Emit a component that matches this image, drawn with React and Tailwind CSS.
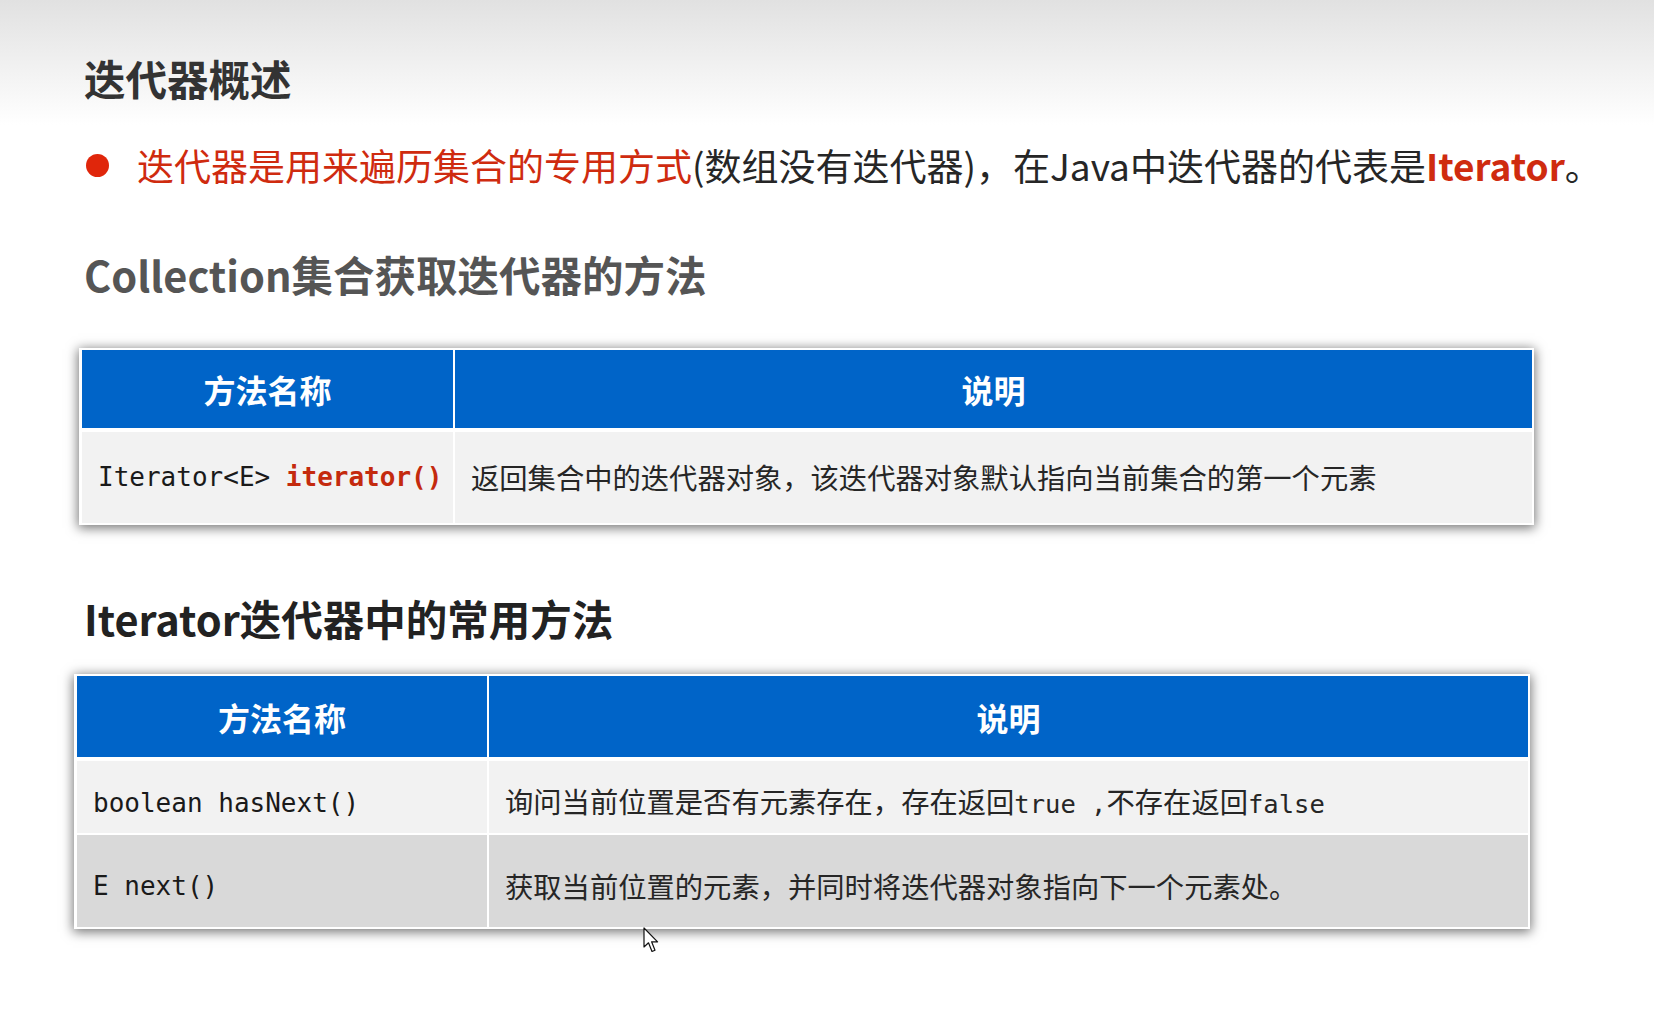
import React from 'react';

const mono = "font-['DejaVu_Sans_Mono','Liberation_Mono',monospace]";

function MethodTable({ className, colsClass, headerClass, rows }) {
  return (
    <div className={`bg-white pt-[2px] pl-[3px] pr-[2px] pb-[2px] shadow-[0_2px_11px_1px_rgba(0,0,0,0.55)] ${className}`}>
      <div className={`grid ${colsClass} gap-x-[2px] ${headerClass}`}>
        <div className="flex items-center justify-center bg-[#0064c8] text-[32px] font-bold text-white">方法名称</div>
        <div className="flex items-center justify-center bg-[#0064c8] text-[32px] font-bold text-white">说明</div>
      </div>
      <div className="mt-[4px] flex flex-col gap-y-[2px]">
        {rows.map((row, i) => (
          <div key={i} className={`grid ${colsClass} gap-x-[2px] ${row.h}`}>
            <div className={`flex items-center pl-[16px] ${row.bg}`}>{row.method}</div>
            <div className={`flex items-center pl-[16px] text-[28.3px] text-[#262626] ${row.bg}`}>{row.desc}</div>
          </div>
        ))}
      </div>
    </div>
  );
}

function Cursor() {
  return (
    <svg className="absolute left-[643px] top-[927px]" width="18" height="27" viewBox="0 0 18 27">
      <path d="M1 1 L1 20 L5.5 15.8 L9 24.5 L12 23.2 L8.6 14.8 L14.6 14.8 Z" fill="#fff" stroke="#111" strokeWidth="1.2" strokeLinejoin="round" />
    </svg>
  );
}

export default function App() {
  const collectionRows = [
    {
      h: 'h-[91px]',
      bg: 'bg-[#f2f2f2]',
      method: (
        <span className={`${mono} text-[26px] text-[#1a1a1a] whitespace-pre`}>
          Iterator&lt;E&gt; <span className="font-bold text-[#c42a0e]">iterator()</span>
        </span>
      ),
      desc: '返回集合中的迭代器对象，该迭代器对象默认指向当前集合的第一个元素',
    },
  ];

  const iteratorRows = [
    {
      h: 'h-[72px]',
      bg: 'bg-[#f2f2f2]',
      method: <span className={`${mono} pt-[12px] text-[26px] text-[#1a1a1a] whitespace-pre`}>boolean hasNext()</span>,
      desc: (
        <span className="pt-[10px]">
          询问当前位置是否有元素存在，存在返回
          <span className={`${mono} text-[25.5px] whitespace-pre`}>true ,</span>
          不存在返回
          <span className={`${mono} text-[25.5px]`}>false</span>
        </span>
      ),
    },
    {
      h: 'h-[92px]',
      bg: 'bg-[#d9d9d9]',
      method: <span className={`${mono} pt-[10px] text-[26px] text-[#1a1a1a] whitespace-pre`}>E next()</span>,
      desc: <span className="pt-[10px]">获取当前位置的元素，并同时将迭代器对象指向下一个元素处。</span>,
    },
  ];

  return (
    <div className="relative h-[1014px] w-full overflow-hidden bg-[linear-gradient(to_bottom,#e1e1e1_0px,#ffffff_125px)] font-['Noto_Sans_CJK_SC','Noto_Sans',sans-serif]">
      <div className="flex flex-col pl-[84px]">
        <h1 className="mt-[54px] h-[48px] text-[41.5px] font-bold leading-[48px] text-[#333333]">迭代器概述</h1>

        <div className="mt-[39px] flex h-[48px] items-center">
          <span className="ml-[2px] mr-[28px] h-[23px] w-[23px] shrink-0 rounded-full bg-[#e0260b]" />
          <p className="whitespace-nowrap text-[37px] leading-[48px] text-[#262626]">
            <span className="text-[#cf2b0f]">迭代器是用来遍历集合的专用方式</span>
            (数组没有迭代器)，在Java中迭代器的代表是
            <span className="font-bold text-[#cf2b0f]">Iterator</span>。
          </p>
        </div>

        <h2 className="mt-[61px] h-[48px] text-[41.5px] font-bold leading-[48px] text-[#555555]">Collection集合获取迭代器的方法</h2>

        <MethodTable
          className="-ml-[5px] mt-[50px] w-[1455px]"
          colsClass="grid-cols-[371px_1077px]"
          headerClass="h-[78px]"
          rows={collectionRows}
        />

        <h2 className="mt-[69px] h-[48px] text-[41.5px] font-bold leading-[48px] text-[#222222]">Iterator迭代器中的常用方法</h2>

        <MethodTable
          className="-ml-[10px] mt-[32px] w-[1456px]"
          colsClass="grid-cols-[410px_1039px]"
          headerClass="h-[81px]"
          rows={iteratorRows}
        />
      </div>

      <Cursor />
    </div>
  );
}
